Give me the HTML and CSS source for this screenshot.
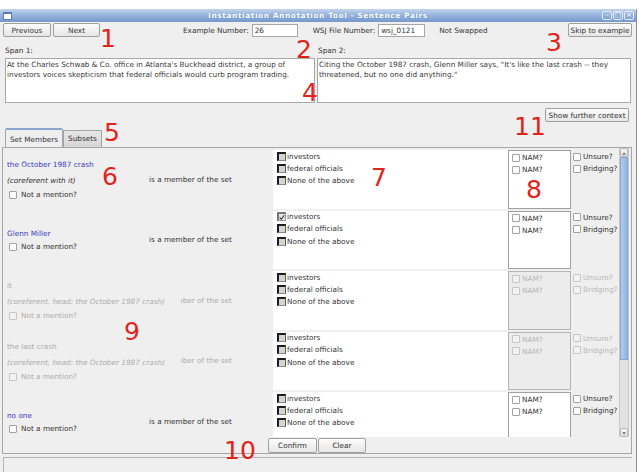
FILE: index.html
```html
<!DOCTYPE html>
<html lang="en">
<head>
    <meta charset="UTF-8">
    <title>Instantiation Annotation Tool - Sentence Pairs</title>
    <link rel="stylesheet" href="styles.css">
</head>
<body>
<div class="window">
    <div class="titlebar">
        <span class="win-icon"></span>
        <span class="title">Instantiation Annotation Tool - Sentence Pairs</span>
        <span class="controls">
            <span class="ctl">&#8211;</span><span class="ctl">&#9633;</span><span class="ctl">&#215;</span>
        </span>
    </div>

    <div class="content">
        <div class="toolbar">
            <button class="btn prev">Previous</button>
            <button class="btn next">Next</button>
            <span class="lbl ex">Example Number:</span>
            <span class="txt ex-num">26</span>
            <span class="lbl wsj">WSJ File Number:</span>
            <span class="txt wsj-num">wsj_0121</span>
            <span class="lbl swapped">Not Swapped</span>
            <button class="btn skip">Skip to example</button>
        </div>

        <div class="spans">
            <div class="span-box">
                <div class="span-lbl">Span 1:</div>
                <div class="area">At the Charles Schwab &amp; Co. office in Atlanta's Buckhead district, a group of investors voices skepticism that federal officials would curb program trading.</div>
            </div>
            <div class="span-box">
                <div class="span-lbl">Span 2:</div>
                <div class="area">Citing the October 1987 crash, Glenn Miller says, "It's like the last crash -- they threatened, but no one did anything."</div>
            </div>
        </div>

        <div class="context-row">
            <button class="btn context">Show further context</button>
        </div>

        <div class="tabs">
            <span class="tab active">Set Members</span>
            <span class="tab">Subsets</span>
        </div>

        <div class="panel">
            <div class="scroll">
                <div class="rows">
                    <div class="row">
                        <div class="left">
                            <div class="mention">
                                <span class="link">the October 1987 crash</span>
                                <span class="coref">(coreferent with it)</span>
                                <span class="notm"><span class="cb"></span>Not a mention?</span>
                            </div>
                            <span class="member">is a member of the set</span>
                        </div>
                        <div class="choices">
                            <div class="opt"><span class="mc"></span>investors</div>
                            <div class="opt"><span class="mc"></span>federal officials</div>
                            <div class="opt"><span class="mc"></span>None of the above</div>
                        </div>
                        <div class="nam">
                            <div class="opt"><span class="cb"></span>NAM?</div>
                            <div class="opt"><span class="cb"></span>NAM?</div>
                        </div>
                        <div class="extra">
                            <div class="opt"><span class="cb"></span>Unsure?</div>
                            <div class="opt"><span class="cb"></span>Bridging?</div>
                        </div>
                    </div>

                    <div class="row">
                        <div class="left">
                            <div class="mention">
                                <span class="link">Glenn Miller</span>
                                <span class="notm"><span class="cb"></span>Not a mention?</span>
                            </div>
                            <span class="member">is a member of the set</span>
                        </div>
                        <div class="choices">
                            <div class="opt"><span class="mc checked"><svg viewBox="0 0 8 8" width="7" height="7"><polyline points="1,4 3,6.5 7,1" fill="none" stroke="#333" stroke-width="1.4"/></svg></span>investors</div>
                            <div class="opt"><span class="mc"></span>federal officials</div>
                            <div class="opt"><span class="mc"></span>None of the above</div>
                        </div>
                        <div class="nam">
                            <div class="opt"><span class="cb"></span>NAM?</div>
                            <div class="opt"><span class="cb"></span>NAM?</div>
                        </div>
                        <div class="extra">
                            <div class="opt"><span class="cb"></span>Unsure?</div>
                            <div class="opt"><span class="cb"></span>Bridging?</div>
                        </div>
                    </div>

                    <div class="row off">
                        <div class="left">
                            <div class="mention">
                                <span class="link">it</span>
                                <span class="coref"><span class="cover">(coreferent, head: the October 1987 crash)</span></span>
                                <span class="notm"><span class="cb"></span>Not a mention?</span>
                            </div>
                            <span class="member">is a member of the set</span>
                        </div>
                        <div class="choices">
                            <div class="opt"><span class="mc"></span>investors</div>
                            <div class="opt"><span class="mc"></span>federal officials</div>
                            <div class="opt"><span class="mc"></span>None of the above</div>
                        </div>
                        <div class="nam">
                            <div class="opt"><span class="cb"></span>NAM?</div>
                            <div class="opt"><span class="cb"></span>NAM?</div>
                        </div>
                        <div class="extra">
                            <div class="opt"><span class="cb"></span>Unsure?</div>
                            <div class="opt"><span class="cb"></span>Bridging?</div>
                        </div>
                    </div>

                    <div class="row off">
                        <div class="left">
                            <div class="mention">
                                <span class="link">the last crash</span>
                                <span class="coref"><span class="cover">(coreferent, head: the October 1987 crash)</span></span>
                                <span class="notm"><span class="cb"></span>Not a mention?</span>
                            </div>
                            <span class="member">is a member of the set</span>
                        </div>
                        <div class="choices">
                            <div class="opt"><span class="mc"></span>investors</div>
                            <div class="opt"><span class="mc"></span>federal officials</div>
                            <div class="opt"><span class="mc"></span>None of the above</div>
                        </div>
                        <div class="nam">
                            <div class="opt"><span class="cb"></span>NAM?</div>
                            <div class="opt"><span class="cb"></span>NAM?</div>
                        </div>
                        <div class="extra">
                            <div class="opt"><span class="cb"></span>Unsure?</div>
                            <div class="opt"><span class="cb"></span>Bridging?</div>
                        </div>
                    </div>

                    <div class="row">
                        <div class="left">
                            <div class="mention">
                                <span class="link">no one</span>
                                <span class="notm"><span class="cb"></span>Not a mention?</span>
                            </div>
                            <span class="member">is a member of the set</span>
                        </div>
                        <div class="choices">
                            <div class="opt"><span class="mc"></span>investors</div>
                            <div class="opt"><span class="mc"></span>federal officials</div>
                            <div class="opt"><span class="mc"></span>None of the above</div>
                        </div>
                        <div class="nam">
                            <div class="opt"><span class="cb"></span>NAM?</div>
                            <div class="opt"><span class="cb"></span>NAM?</div>
                        </div>
                        <div class="extra">
                            <div class="opt"><span class="cb"></span>Unsure?</div>
                            <div class="opt"><span class="cb"></span>Bridging?</div>
                        </div>
                    </div>
                </div>

                <div class="scrollbar">
                    <span class="arrow up">&#9652;</span>
                    <span class="thumb"></span>
                    <span class="track"></span>
                    <span class="arrow down">&#9662;</span>
                </div>
            </div>

            <div class="actions">
                <button class="btn confirm">Confirm</button>
                <button class="btn clear">Clear</button>
            </div>
        </div>

        <div class="status"></div>
    </div>

    <!-- red callout numbers drawn over the screenshot -->
    <span class="num n1">1</span>
    <span class="num n2">2</span>
    <span class="num n3">3</span>
    <span class="num n4">4</span>
    <span class="num n5">5</span>
    <span class="num n6">6</span>
    <span class="num n7">7</span>
    <span class="num n8">8</span>
    <span class="num n9">9</span>
    <span class="num n10">10</span>
    <span class="num n11">11</span>
</div>
</body>
</html>
```

FILE: styles.css
```css
* {
    box-sizing: border-box;
}

body {
    margin: 0;
    background: #fff;
    font-family: "DejaVu Sans", sans-serif;
    font-size: 7.3px;
    color: #333;
}

.window {
    position: relative;
    width: 637px;
    height: 463px;
    margin-top: 9px;
    background: #efefef;
    border-right: 1px solid #8e8e8e;
    overflow: hidden;
}

/* title bar */
.titlebar {
    height: 13px;
    display: grid;
    grid-template-columns: 1fr auto 1fr;
    align-items: center;
    background: linear-gradient(#c2d4ed, #90afdb 55%, #7698cc);
    border-radius: 2px 2px 0 0;
}

.win-icon {
    width: 9px;
    height: 8px;
    margin-left: 3px;
    background: #fff;
    border: 1px solid #5d7fb0;
    border-top-width: 2px;
}

.title {
    color: #fff;
    font-weight: bold;
    font-size: 7.4px;
    letter-spacing: 0.6px;
    text-shadow: 0 0 1px #557aae;
}

.controls {
    justify-self: end;
    display: flex;
    gap: 1px;
    margin-right: 2px;
}

.ctl {
    width: 10px;
    height: 9px;
    border: 1px solid #e2ebf7;
    border-radius: 2px;
    color: #fff;
    font-size: 7px;
    line-height: 7px;
    text-align: center;
    background: linear-gradient(#a8c1e6, #7c9fd2);
}

.content {
    padding: 1px 4px 0 3px;
}

/* buttons and fields */
.btn {
    font: inherit;
    color: #333;
    height: 14px;
    padding: 0;
    border: 1px solid #a0a0a0;
    border-radius: 2px;
    background: linear-gradient(#fcfcfc, #e6e6e6);
}

.toolbar {
    display: flex;
    align-items: center;
    height: 14px;
}

.prev { width: 48px; }
.next { width: 47px; margin-left: 2px; }
.skip { width: 64px; margin-left: auto; }

.lbl { white-space: nowrap; }
.ex { margin-left: 83px; }
.wsj { margin-left: 15px; }
.swapped { margin-left: 14px; }

.txt {
    height: 13px;
    margin-left: 3px;
    margin-top: 1px;
    padding: 0 2px;
    line-height: 11px;
    background: #fff;
    border: 1px solid #a6a6a6;
}

.ex-num { width: 46px; }
.wsj-num { width: 47px; }

/* span text areas */
.spans {
    display: grid;
    grid-template-columns: 310px 314px;
    gap: 2px;
    margin: 9px 0 0 2px;
}

.span-lbl {
    height: 10px;
    line-height: 10px;
    margin-bottom: 2px;
}

.span-box + .span-box .span-lbl {
    padding-left: 1px;
}

.area {
    height: 45px;
    padding: 1px 1px;
    line-height: 9.5px;
    background: #fff;
    border: 1px solid #a8a8a8;
    color: #3a3a3a;
}

.context-row {
    display: flex;
    justify-content: flex-end;
    margin: 5px 3px 0 0;
}

.context { width: 84px; }

/* tabs */
.tabs {
    display: flex;
    align-items: flex-end;
    height: 19px;
    margin: 6px 0 0 2px;
}

.tab {
    height: 17px;
    width: 39px;
    line-height: 16px;
    text-align: center;
    border: 1px solid #a4a4a4;
    border-bottom: none;
    background: linear-gradient(#e6e6e6, #d6d6d6);
}

.tab.active {
    width: 58px;
    height: 19px;
    line-height: 19px;
    background: #efefef;
    border-top: 2px solid #8aa6cf;
    border-radius: 2px 2px 0 0;
}

/* main panel */
.panel {
    width: 630px;
    margin-left: -1px;
    border: 1px solid #a6a6a6;
}

.scroll {
    height: 289px;
    display: flex;
    overflow: hidden;
}

.rows {
    width: 616px;
    padding-top: 2px;
}

.row {
    display: flex;
    height: 58.5px;
    margin-bottom: 2px;
}

.left {
    width: 270px;
    display: flex;
    align-items: center;
    padding-left: 4px;
}

.mention {
    width: 142px;
    display: flex;
    flex-direction: column;
}

.link {
    color: #3b3bbf;
    line-height: 15px;
}

.coref {
    font-style: italic;
    line-height: 17px;
    white-space: nowrap;
}

/* the long label paints over the start of "is a member of the set" */
.cover {
    position: relative;
    z-index: 1;
    padding-right: 16px;
    background: #efefef;
}

.notm {
    display: flex;
    align-items: center;
    line-height: 12px;
    padding-left: 2px;
}

.notm .cb { margin-right: 4px; }

.member {
    white-space: nowrap;
}

.choices {
    width: 235px;
    background: #fff;
    padding: 0 4px;
}

.opt {
    display: flex;
    align-items: center;
    height: 12.3px;
    white-space: nowrap;
}

.mc {
    width: 9px;
    height: 9px;
    margin-right: 1px;
    display: flex;
    align-items: center;
    justify-content: center;
    background: #d4d4d4;
    border-top: 2px solid #1c1c1c;
    border-left: 2px solid #1c1c1c;
    border-right: 1px solid #5a5a5a;
    border-bottom: 1px solid #8a8a8a;
}

.mc.checked {
    background: #e4e4e4;
    border-color: #777 #999 #999 #777;
}

.nam {
    width: 63px;
    background: #fff;
    border: 1px solid #a0a0a0;
    padding: 0 3px;
}

.extra {
    width: 48px;
    padding-left: 2px;
}

.cb {
    width: 8px;
    height: 8px;
    margin-right: 2px;
    background: #fff;
    border: 1px solid #a2a2a2;
    border-radius: 1px;
    flex-shrink: 0;
}

.nam .opt,
.extra .opt {
    padding-top: 1px;
}

/* disabled rows */
.row.off .left {
    color: #acacac;
}

.row.off .link { color: #acacac; }

.row.off .nam {
    background: #ececec;
    border-color: #b4b4b4;
    color: #b6b6b6;
}

.row.off .extra { color: #b6b6b6; }

.row.off .cb {
    background: #f2f2f2;
    border-color: #c6c6c6;
}

/* scrollbar */
.scrollbar {
    width: 10px;
    display: flex;
    flex-direction: column;
    border-left: 1px solid #c8c8c8;
    border-right: 1px solid #c8c8c8;
}

.arrow {
    height: 9px;
    font-size: 6px;
    line-height: 8px;
    text-align: center;
    color: #777;
    background: linear-gradient(#f6f6f6, #e2e2e2);
    border: 1px solid #b6b6b6;
    border-radius: 2px;
}

.thumb {
    height: 203px;
    background: linear-gradient(90deg, #b3cbee, #93b4e4);
    border: 1px solid #86a6d6;
}

.track {
    flex: 1;
    background: #e2e2e2;
}

.actions {
    display: flex;
    justify-content: center;
    gap: 1px;
    height: 16px;
    padding-top: 1px;
}

.confirm { width: 49px; height: 15px; }
.clear { width: 48px; height: 15px; }

.status {
    height: 16px;
    width: 629px;
    margin: 3px 0 0 0;
    border-top: 1px solid #b4b4b4;
    border-left: 1px solid #b4b4b4;
}

/* red callouts */
.num {
    position: absolute;
    font-size: 25px;
    line-height: 25px;
    color: #e2231b;
}

.n1 { left: 100px; top: 17px; }
.n2 { left: 296px; top: 28px; }
.n3 { left: 546px; top: 21px; }
.n4 { left: 302px; top: 71px; }
.n5 { left: 104px; top: 111px; }
.n6 { left: 102px; top: 155px; }
.n7 { left: 371px; top: 156px; }
.n8 { left: 526px; top: 168px; }
.n9 { left: 124px; top: 310px; }
.n10 { left: 224px; top: 429px; }
.n11 { left: 514px; top: 105px; }
```
